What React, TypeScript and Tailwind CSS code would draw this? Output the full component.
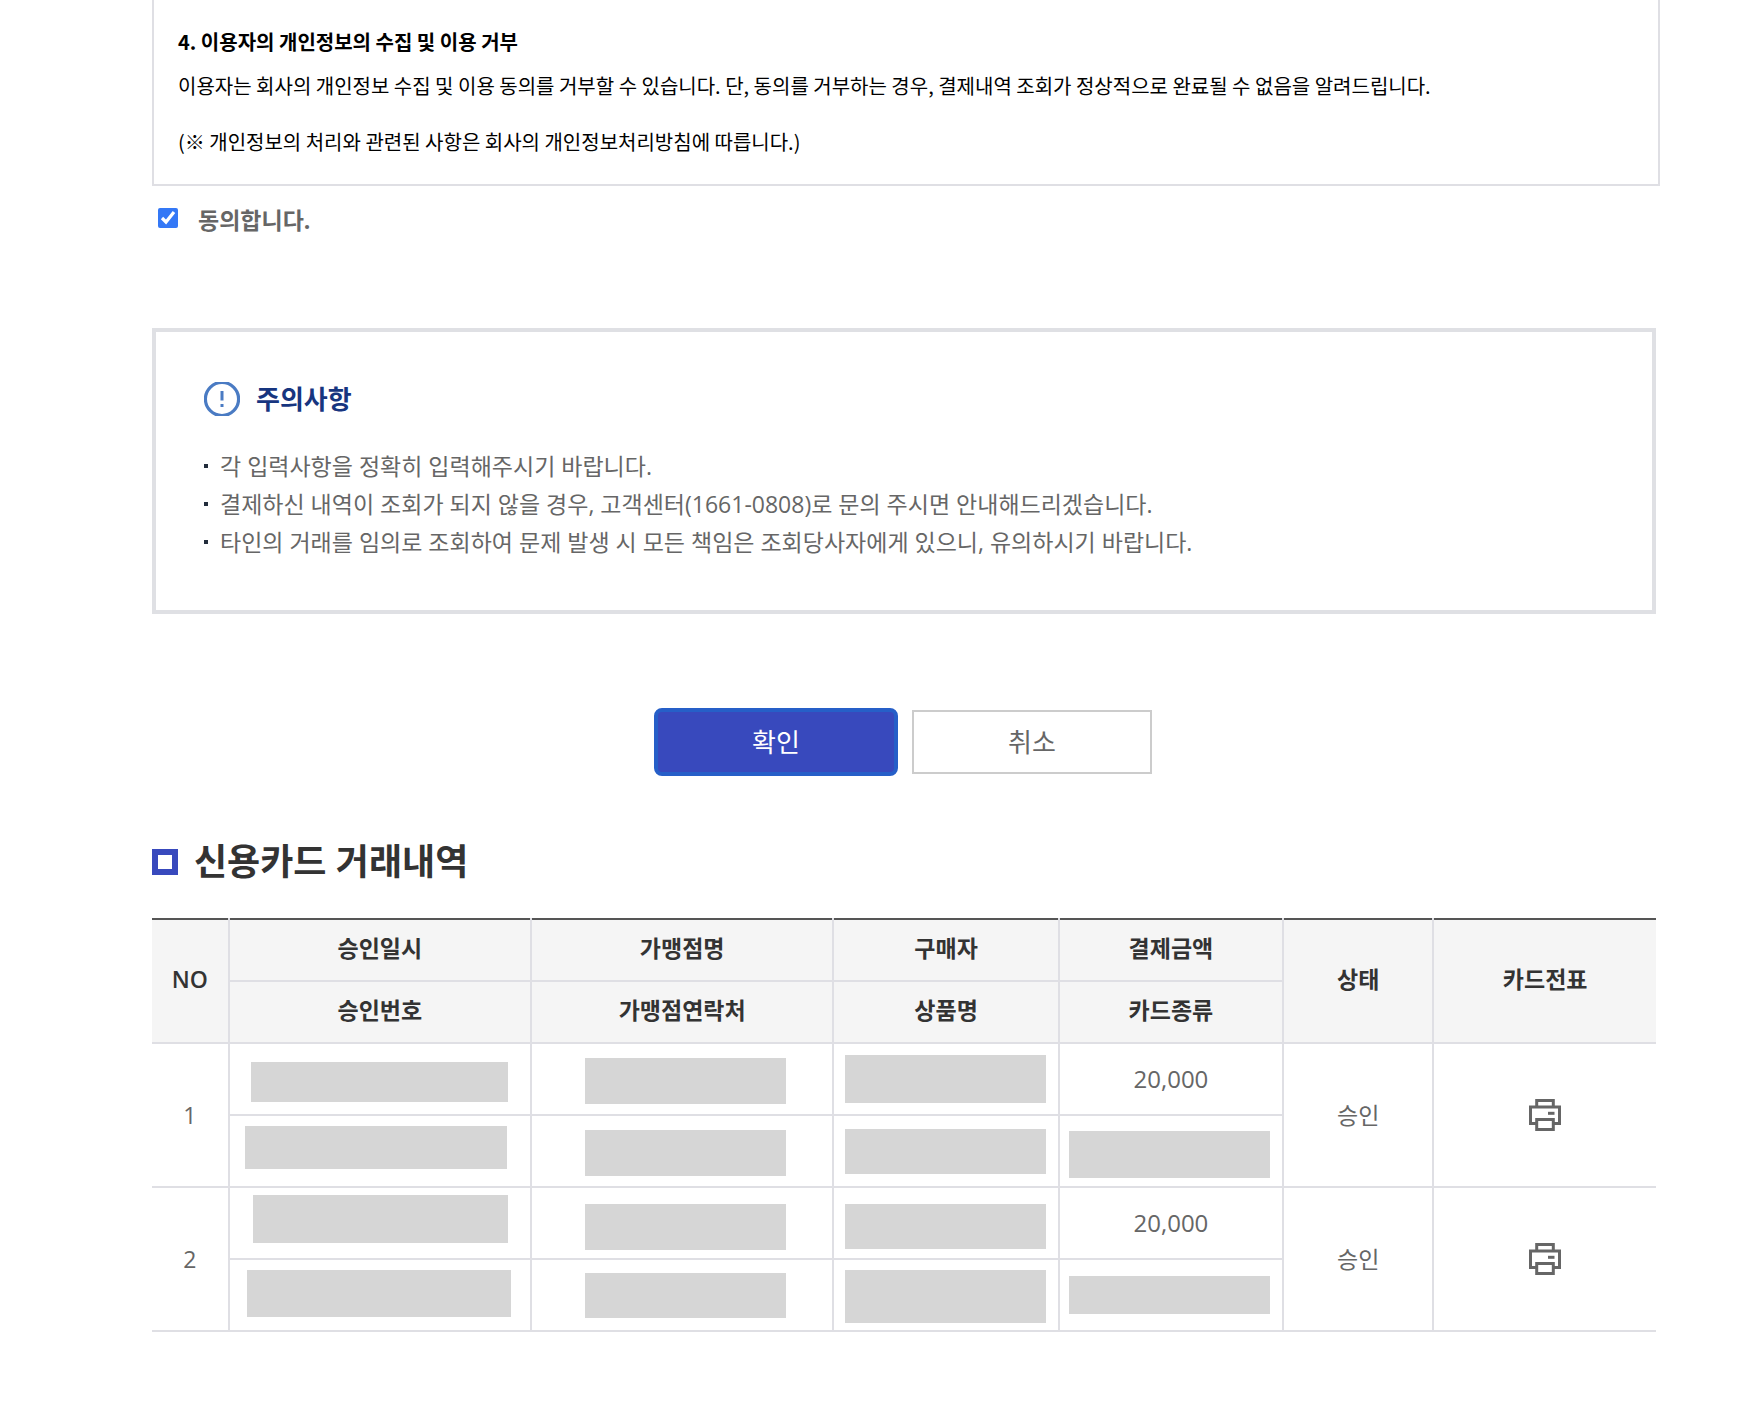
// src/App.tsx
import { useState } from 'react'

type Transaction = {
  no: number
  amount: string
  status: string
  // size and place of each masked field inside its cell
  approvedAt: string
  approvalNo: string
  merchant: string
  merchantTel: string
  buyer: string
  product: string
  cardType: string
}

const transactions: Transaction[] = [
  {
    no: 1,
    amount: '20,000',
    status: '승인',
    approvedAt: 'mt-[18px] ml-[21px] h-[40px] w-[257px]',
    approvalNo: 'mt-[10px] ml-[15px] h-[43px] w-[262px]',
    merchant: 'mt-[14px] ml-[53px] h-[46px] w-[201px]',
    merchantTel: 'mt-[14px] ml-[53px] h-[46px] w-[201px]',
    buyer: 'mt-[11px] ml-[11px] h-[48px] w-[201px]',
    product: 'mt-[13px] ml-[11px] h-[45px] w-[201px]',
    cardType: 'mt-[15px] ml-[9px] h-[47px] w-[201px]',
  },
  {
    no: 2,
    amount: '20,000',
    status: '승인',
    approvedAt: 'mt-[7px] ml-[23px] h-[48px] w-[255px]',
    approvalNo: 'mt-[10px] ml-[17px] h-[47px] w-[264px]',
    merchant: 'mt-[16px] ml-[53px] h-[46px] w-[201px]',
    merchantTel: 'mt-[13px] ml-[53px] h-[45px] w-[201px]',
    buyer: 'mt-[16px] ml-[11px] h-[45px] w-[201px]',
    product: 'mt-[10px] ml-[11px] h-[53px] w-[201px]',
    cardType: 'mt-[16px] ml-[9px] h-[38px] w-[201px]',
  },
]

const notices = [
  '각 입력사항을 정확히 입력해주시기 바랍니다.',
  '결제하신 내역이 조회가 되지 않을 경우, 고객센터(1661-0808)로 문의 주시면 안내해드리겠습니다.',
  '타인의 거래를 임의로 조회하여 문제 발생 시 모든 책임은 조회당사자에게 있으니, 유의하시기 바랍니다.',
]

function NoticeIcon() {
  return (
    <svg width="36" height="34" viewBox="0 0 36 34" fill="none" aria-hidden="true">
      <circle cx="18" cy="17" r="16.6" stroke="#4a7bc3" strokeWidth="3.2" />
      <path d="M18 9v9.5M18 22v3" stroke="#4a7bc3" strokeWidth="3" />
    </svg>
  )
}

function PrinterIcon() {
  return (
    <svg width="32" height="32" viewBox="0 0 32 32" fill="none" stroke="#666" strokeWidth="3" aria-hidden="true">
      <path d="M7.7 8V1.5h16.6V8" />
      <path d="M7.7 24.5H1.5V8h29v16.5h-6.2" />
      <path d="M7.7 20.5h16.6v10H7.7z" />
      <path d="M19 14.3h6.5" />
    </svg>
  )
}

function MaskedCell({ mask }: { mask: string }) {
  return (
    <td className="h-[72px] border-2 border-[#dfdfe4] p-0 align-top">
      <div className={`bg-[#d6d6d6] ${mask}`} />
    </td>
  )
}

function TransactionRows({ item }: { item: Transaction }) {
  return (
    <>
      <tr>
        <td rowSpan={2} className="border-2 border-l-0 border-[#dfdfe4]">{item.no}</td>
        <MaskedCell mask={item.approvedAt} />
        <MaskedCell mask={item.merchant} />
        <MaskedCell mask={item.buyer} />
        <td className="h-[72px] border-2 border-[#dfdfe4] p-0 text-2xl">{item.amount}</td>
        <td rowSpan={2} className="border-2 border-[#dfdfe4]">{item.status}</td>
        <td rowSpan={2} className="border-2 border-r-0 border-[#dfdfe4]">
          <button type="button" aria-label="카드전표" className="mx-auto block">
            <PrinterIcon />
          </button>
        </td>
      </tr>
      <tr>
        <MaskedCell mask={item.approvalNo} />
        <MaskedCell mask={item.merchantTel} />
        <MaskedCell mask={item.product} />
        <MaskedCell mask={item.cardType} />
      </tr>
    </>
  )
}

export default function App() {
  const [agreed, setAgreed] = useState(true)

  const th = 'h-[62px] border-2 border-[#dfdfe4] border-t-[#555] p-0 pb-1'
  const thSub = 'h-[62px] border-2 border-[#dfdfe4] p-0 pb-1 font-bold'

  return (
    <main className="min-h-screen bg-white pr-[92px] pb-20 pl-[152px] font-['Open_Sans','Noto_Sans_CJK_KR',sans-serif] text-[23px] text-[#666]">
      <section className="-mr-1 border-2 border-t-0 border-[#dfdfe4] px-6 pt-6 pb-6 font-['Noto_Sans_CJK_KR',sans-serif] text-xl leading-9 text-black">
        <h4 className="font-bold">4. 이용자의 개인정보의 수집 및 이용 거부</h4>
        <p className="mt-2">
          이용자는 회사의 개인정보 수집 및 이용 동의를 거부할 수 있습니다. 단, 동의를 거부하는 경우, 결제내역 조회가 정상적으로 완료될 수 없음을 알려드립니다.
        </p>
        <p className="mt-5">(※ 개인정보의 처리와 관련된 사항은 회사의 개인정보처리방침에 따릅니다.)</p>
      </section>

      <label className="mt-4 flex w-fit items-start gap-5 pl-1.5 leading-9 font-bold">
        <input
          type="checkbox"
          checked={agreed}
          onChange={(e) => setAgreed(e.target.checked)}
          className="mt-1.5 size-5 accent-[#3478f6]"
        />
        동의합니다.
      </label>

      <section className="mt-[90px] border-4 border-[#dfe0e4] px-12 pt-[50px] pb-[49px]">
        <h3 className="flex items-center gap-4 text-[26px] leading-[34px] font-bold text-[#17357f]">
          <NoticeIcon />
          주의사항
        </h3>
        <ul className="mt-[31px] leading-[38px]">
          {notices.map((text) => (
            <li key={text} className="flex items-center gap-3">
              <span className="size-1 shrink-0 bg-[#222c3c]" />
              {text}
            </li>
          ))}
        </ul>
      </section>

      <div className="mt-24 flex justify-center gap-4 text-[26px]">
        <button
          type="button"
          className="h-16 w-60 rounded-md bg-[#3849bd] text-white outline-4 -outline-offset-2 outline-[#265fc8]"
        >
          확인
        </button>
        <button type="button" className="h-16 w-60 border-2 border-[#ccc] bg-white">
          취소
        </button>
      </div>

      <h2 className="mt-16 flex items-center gap-4 text-4xl leading-[48px] font-bold text-[#333]">
        <span className="size-[26px] border-6 border-[#3849bd]" />
        신용카드 거래내역
      </h2>

      <table className="mt-8 w-full table-fixed border-collapse text-center">
        <colgroup>
          <col className="w-[5.1%]" />
          <col className="w-[20.1%]" />
          <col className="w-[20.1%]" />
          <col className="w-[15%]" />
          <col className="w-[14.9%]" />
          <col className="w-[10%]" />
          <col />
        </colgroup>
        <thead className="bg-[#f5f5f5] text-[#333]">
          <tr>
            <th rowSpan={2} className={`${th} border-l-0 font-semibold`}>NO</th>
            <th className={`${th} font-bold`}>승인일시</th>
            <th className={`${th} font-bold`}>가맹점명</th>
            <th className={`${th} font-bold`}>구매자</th>
            <th className={`${th} font-bold`}>결제금액</th>
            <th rowSpan={2} className={`${th} font-bold`}>상태</th>
            <th rowSpan={2} className={`${th} border-r-0 font-bold`}>카드전표</th>
          </tr>
          <tr>
            <th className={thSub}>승인번호</th>
            <th className={thSub}>가맹점연락처</th>
            <th className={thSub}>상품명</th>
            <th className={thSub}>카드종류</th>
          </tr>
        </thead>
        <tbody>
          {transactions.map((item) => (
            <TransactionRows key={item.no} item={item} />
          ))}
        </tbody>
      </table>
    </main>
  )
}
